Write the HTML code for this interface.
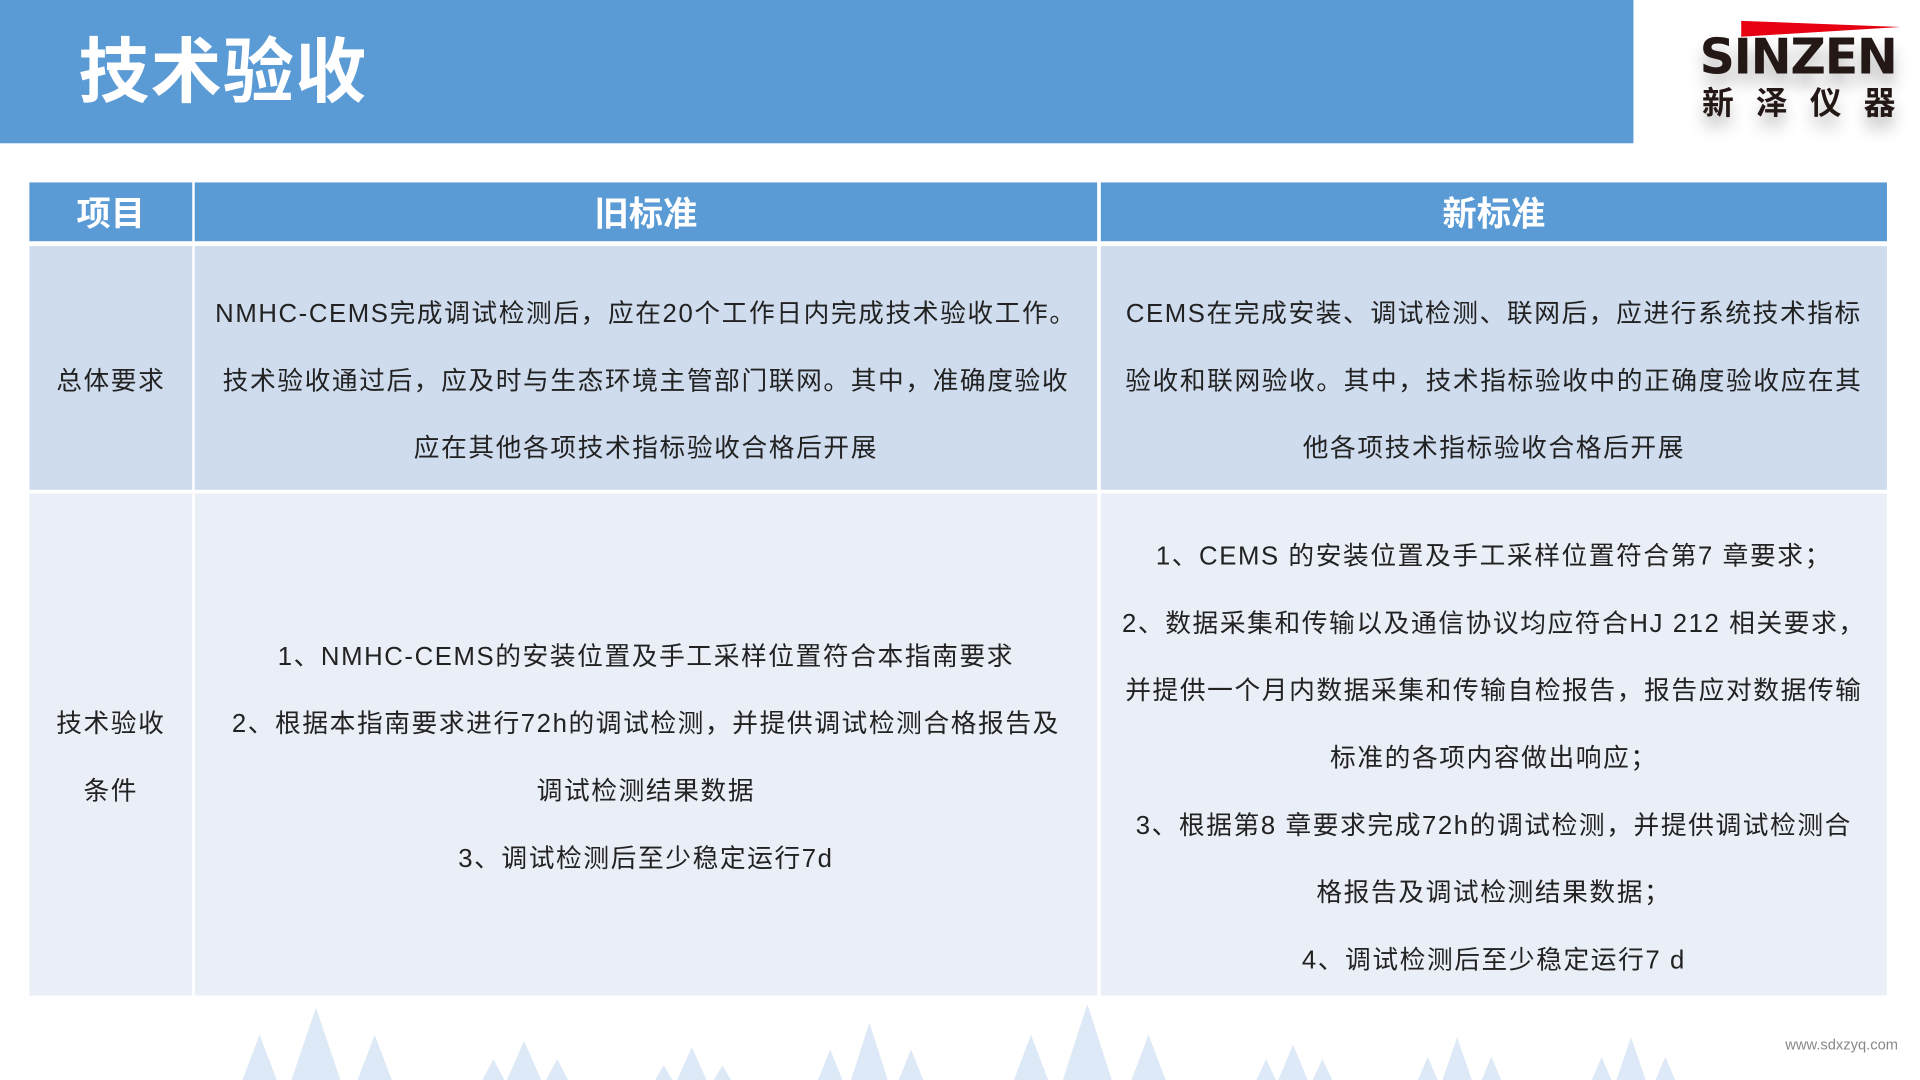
<!DOCTYPE html>
<html><head><meta charset="utf-8"><style>
html,body{margin:0;padding:0;background:#fff;overflow:hidden}
#w{width:1568px;height:882px;position:relative;transform:scale(1.22449);transform-origin:0 0;font-family:"Liberation Sans","Noto Sans CJK SC",sans-serif;color:#222}
.hd{position:absolute;left:0;top:0;width:1334px;height:117px;background:#5b9bd5}
.hd h1{position:absolute;left:64px;top:12px;margin:0;font-size:58px;color:#fff;font-weight:bold;letter-spacing:1px}
.c{position:absolute;display:flex;align-items:center;justify-content:center;text-align:center;box-sizing:border-box;white-space:nowrap}
.th{top:149px;height:48px;background:#5b9bd5;color:#fff;font-weight:bold;font-size:28px}
.r1{top:201px;height:199px;background:#cfdcee}
.r2{top:403px;height:410px;background:#e9eef7}
.t{font-size:21px;line-height:55px;padding-top:22px;letter-spacing:1.3px}
</style></head><body><div id="w">
<div class="hd"><h1>技术验收</h1></div>
<svg style="position:absolute;left:1380px;top:8px" width="185" height="30"><polygon points="42,9 172,14 42,22" fill="#e60012"/></svg>
<div style="position:absolute;left:1388px;top:24px;font-size:40px;font-weight:900;color:#231815;white-space:nowrap;text-shadow:0 10px 12px rgba(0,0,0,0.25);font-family:'DejaVu Sans','Liberation Sans',sans-serif;letter-spacing:-1px">SINZEN</div>
<div style="position:absolute;left:1390px;top:64px;font-size:26px;font-weight:bold;color:#231815;white-space:nowrap;letter-spacing:18px;text-shadow:0 10px 12px rgba(0,0,0,0.25)">新泽仪器</div>

<div class="c th" style="left:24px;width:133px">项目</div>
<div class="c th" style="left:159px;width:737px">旧标准</div>
<div class="c th" style="left:899px;width:642px">新标准</div>

<div class="c r1 t" style="left:24px;width:133px">总体要求</div>
<div class="c r1 t" style="left:159px;width:737px">NMHC-CEMS完成调试检测后，应在20个工作日内完成技术验收工作。<br>技术验收通过后，应及时与生态环境主管部门联网。其中，准确度验收<br>应在其他各项技术指标验收合格后开展</div>
<div class="c r1 t" style="left:899px;width:642px">CEMS在完成安装、调试检测、联网后，应进行系统技术指标<br>验收和联网验收。其中，技术指标验收中的正确度验收应在其<br>他各项技术指标验收合格后开展</div>

<div class="c r2 t" style="left:24px;width:133px">技术验收<br>条件</div>
<div class="c r2 t" style="left:159px;width:737px">1、NMHC-CEMS的安装位置及手工采样位置符合本指南要求<br>2、根据本指南要求进行72h的调试检测，并提供调试检测合格报告及<br>调试检测结果数据<br>3、调试检测后至少稳定运行7d</div>
<div class="c r2 t" style="left:899px;width:642px">1、CEMS 的安装位置及手工采样位置符合第7 章要求；<br>2、数据采集和传输以及通信协议均应符合HJ 212 相关要求，<br>并提供一个月内数据采集和传输自检报告，报告应对数据传输<br>标准的各项内容做出响应；<br>3、根据第8 章要求完成72h的调试检测，并提供调试检测合<br>格报告及调试检测结果数据；<br>4、调试检测后至少稳定运行7 d</div>

<svg style="position:absolute;left:0;top:815px" width="1568" height="67">
<g fill="#dde9f6">
<polygon points="258,8 238,67 278,67"/><polygon points="212,30 198,67 226,67"/><polygon points="306,30 292,67 320,67"/>
<polygon points="428,35 414,67 442,67"/><polygon points="403,50 394,67 412,67"/><polygon points="455,50 446,67 464,67"/>
<polygon points="565,40 553,67 577,67"/><polygon points="542,55 535,67 549,67"/><polygon points="590,55 583,67 597,67"/>
<polygon points="710,20 695,67 725,67"/><polygon points="678,42 668,67 688,67"/><polygon points="744,42 734,67 754,67"/>
<polygon points="888,5 868,67 908,67"/><polygon points="842,30 828,67 856,67"/><polygon points="938,30 924,67 952,67"/>
<polygon points="1056,38 1044,67 1068,67"/><polygon points="1034,50 1026,67 1042,67"/><polygon points="1080,50 1072,67 1088,67"/>
<polygon points="1190,32 1178,67 1202,67"/><polygon points="1166,48 1158,67 1174,67"/><polygon points="1218,48 1210,67 1226,67"/>
<polygon points="1332,32 1320,67 1344,67"/><polygon points="1308,48 1300,67 1316,67"/><polygon points="1360,48 1352,67 1368,67"/>
</g></svg>
<div style="position:absolute;left:1458px;top:846px;font-size:12px;color:#888">www.sdxzyq.com</div>
</div></body></html>
